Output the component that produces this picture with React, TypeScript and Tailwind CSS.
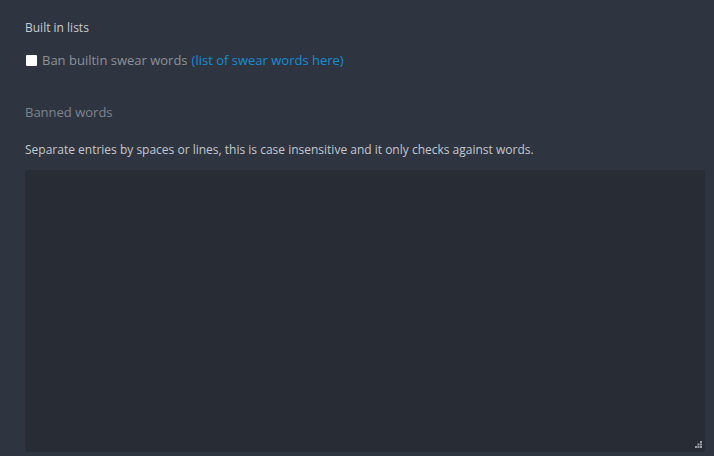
import React from "react";

export default function App() {
  return (
    <div className="w-[714px] h-[456px] overflow-hidden bg-[#2f3540] pl-[25px] pr-[9px]" style={{ fontFamily: '"Open Sans", sans-serif' }}>
      <div className="pt-[20px] text-[12px] leading-[16px] text-[#c9ccd1]">Built in lists</div>
      <label className="mt-[15px] flex items-center text-[13px] leading-[18px] text-[#8b9099]">
        <span className="ml-[1px] w-[11px] h-[11px] bg-white rounded-[1px] mr-[5px]" />
        <span>Ban builtin swear words</span>
        <span className="text-[#168cd3] ml-[4px]">(list of swear words here)</span>
      </label>
      <div className="mt-[34px] text-[13px] leading-[18px] text-[#7e848e]">Banned words</div>
      <div className="mt-[21px] text-[12px] leading-[16px] text-[#c3c7cd]">
        Separate entries by spaces or lines, this is case insensitive and it only checks against words.
      </div>
      <div className="mt-[12px] relative h-[282px] w-[680px] rounded-[3px] bg-[#282c35]">
        <svg className="absolute right-[3px] bottom-[4px]" width="7" height="7" viewBox="0 0 7 7">
          <rect x="5" y="0" width="2" height="2" fill="#9aa0a8" />
          <rect x="2.5" y="2.5" width="2" height="2" fill="#9aa0a8" />
          <rect x="5" y="2.5" width="2" height="2" fill="#9aa0a8" />
          <rect x="0" y="5" width="2" height="2" fill="#9aa0a8" />
          <rect x="2.5" y="5" width="2" height="2" fill="#9aa0a8" />
          <rect x="5" y="5" width="2" height="2" fill="#9aa0a8" />
        </svg>
      </div>
    </div>
  );
}
